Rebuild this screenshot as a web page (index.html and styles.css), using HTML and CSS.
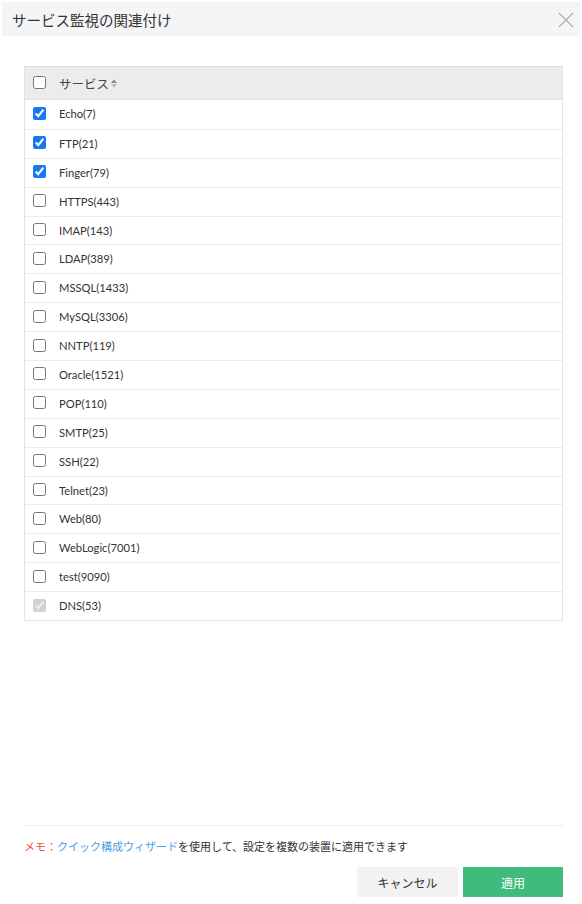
FILE: index.html
```html
<!DOCTYPE html>
<html lang="ja">
<head>
<meta charset="utf-8">
<link rel="stylesheet" href="styles.css">
</head>
<body>
<div class="dialog">
  <div class="dlg-head">
    <span class="title">サービス監視の関連付け</span>
    <svg class="close" width="16" height="16" viewBox="0 0 16 16"><path d="M1 1L15 15M15 1L1 15" stroke="#a9abae" stroke-width="1.1" fill="none"/></svg>
  </div>
  <div class="content">
    <div class="table">
      <div class="row head">
        <input type="checkbox" class="cb">
        <span class="label">サービス</span>
        <svg class="sort" width="6" height="9" viewBox="0 0 6 9"><path d="M0 4L3 0.5L6 4Z" fill="#888"/><path d="M0 5L3 8.5L6 5Z" fill="#bbb"/></svg>
      </div>
      <div class="row"><input type="checkbox" class="cb" checked><span class="label">Echo(7)</span></div>
      <div class="row"><input type="checkbox" class="cb" checked><span class="label">FTP(21)</span></div>
      <div class="row"><input type="checkbox" class="cb" checked><span class="label">Finger(79)</span></div>
      <div class="row"><input type="checkbox" class="cb"><span class="label">HTTPS(443)</span></div>
      <div class="row"><input type="checkbox" class="cb"><span class="label">IMAP(143)</span></div>
      <div class="row"><input type="checkbox" class="cb"><span class="label">LDAP(389)</span></div>
      <div class="row"><input type="checkbox" class="cb"><span class="label">MSSQL(1433)</span></div>
      <div class="row"><input type="checkbox" class="cb"><span class="label">MySQL(3306)</span></div>
      <div class="row"><input type="checkbox" class="cb"><span class="label">NNTP(119)</span></div>
      <div class="row"><input type="checkbox" class="cb"><span class="label">Oracle(1521)</span></div>
      <div class="row"><input type="checkbox" class="cb"><span class="label">POP(110)</span></div>
      <div class="row"><input type="checkbox" class="cb"><span class="label">SMTP(25)</span></div>
      <div class="row"><input type="checkbox" class="cb"><span class="label">SSH(22)</span></div>
      <div class="row"><input type="checkbox" class="cb"><span class="label">Telnet(23)</span></div>
      <div class="row"><input type="checkbox" class="cb"><span class="label">Web(80)</span></div>
      <div class="row"><input type="checkbox" class="cb"><span class="label">WebLogic(7001)</span></div>
      <div class="row"><input type="checkbox" class="cb"><span class="label">test(9090)</span></div>
      <div class="row"><input type="checkbox" class="cb" checked disabled><span class="label">DNS(53)</span></div>
    </div>
  </div>
  <div class="footer">
    <p class="memo"><span class="memo-key">メモ：</span><a class="memo-link">クイック構成ウィザード</a>を使用して、設定を複数の装置に適用できます</p>
    <div class="buttons">
      <button class="btn cancel">キャンセル</button>
      <button class="btn apply">適用</button>
    </div>
  </div>
</div>
</body>
</html>
```
FILE: styles.css
```css
* { box-sizing: border-box; }
html, body { margin: 0; padding: 0; background: #fff; }
body {
  font-family: "Lato", "Noto Sans CJK JP", sans-serif;
  color: #333;
}
.dialog {
  width: 582px;
  height: 904px;
  display: flex;
  flex-direction: column;
}
.dlg-head {
  margin: 2px 2px 0 2px;
  height: 34px;
  background: #f4f5f7;
  display: flex;
  align-items: center;
  justify-content: space-between;
  padding: 0 6px 0 10px;
}
.title {
  font-size: 14.5px;
  color: #333;
  font-family: "Noto Sans CJK JP", sans-serif;
}
.close { display: block; margin-top: 1px; }
.content {
  padding: 30px 19px 0 24px;
}
.table {
  border: 1px solid #e4e4e4;
  border-top: 1px solid #e0e0e0;
}
.row {
  height: 28.9px;
  display: flex;
  align-items: center;
  padding-left: 8px;
  border-top: 1px solid #ececec;
  font-size: 11.2px;
}
.row .label { margin-top: -1px; }
.row.head {
  height: 33px;
  background: #ececec;
  border-top: none;
  border-bottom: 1px solid #e2e2e2;
}
.row.head + .row { border-top: none; }
.cb {
  width: 13px;
  height: 13px;
  margin: 0 13px 0 0;
  accent-color: #1877f2;
}
.row .cb { margin-top: -2px; }
.row.head .label {
  font-family: "Noto Sans CJK JP", sans-serif;
  font-size: 12.5px;
  color: #444;
  margin-top: 0;
}
.label { color: #333; }
.sort { margin-left: 2px; margin-top: 1px; }
.footer {
  margin-top: auto;
  margin-left: 24px;
  margin-right: 19px;
  border-top: 1px solid #eeeeee;
  padding-top: 12px;
  padding-bottom: 7px;
}
.memo {
  margin: 0;
  font-family: "Noto Sans CJK JP", sans-serif;
  font-size: 11px;
  line-height: 17px;
  color: #333;
}
.memo-key { color: #f04a4a; }
.memo-link { color: #4a9ee8; }
.buttons {
  display: flex;
  justify-content: flex-end;
  gap: 5px;
  margin-top: 12px;
}
.btn {
  height: 30px;
  border: none;
  font-family: "Noto Sans CJK JP", sans-serif;
  font-size: 12px;
  padding: 0;
}
.cancel { width: 101px; background: #f2f2f2; color: #333; }
.apply { width: 100px; background: #3fbb7b; color: #fff; }
```
